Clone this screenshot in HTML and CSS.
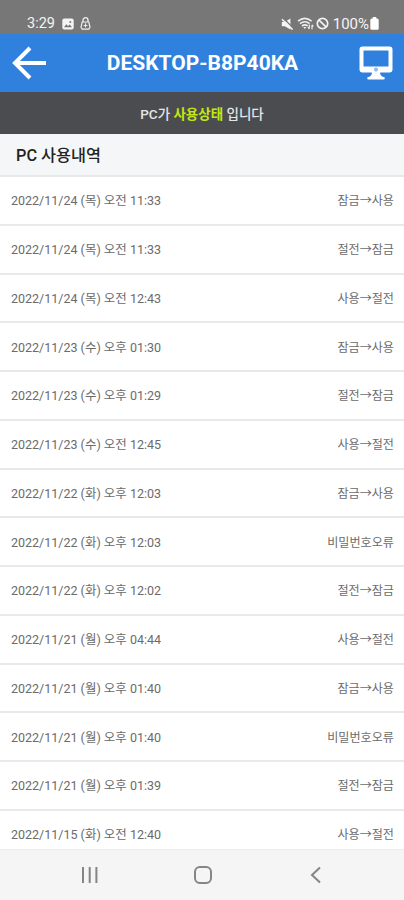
FILE: index.html
```
<!DOCTYPE html>
<html lang="ko">
<head>
<meta charset="utf-8">
<meta name="viewport" content="width=device-width, initial-scale=1">
<title>PC 사용내역</title>
<link rel="stylesheet" href="styles.css">
</head>
<body>
<div class="phone">
  <div class="status">
    <span class="clock">3:29</span>
    <svg class="st-image" width="12" height="12" viewBox="0 0 12 12"><rect x=".3" y=".5" width="11.4" height="11" rx="2" fill="#f4f4f4"/><path d="M2 9.3 4.3 6.3 6 8 7.8 6.5 10 9.3Z" fill="#777"/><circle cx="8.3" cy="3.9" r="1" fill="#777"/></svg>
    <svg class="st-lock" width="11" height="13" viewBox="0 0 11 13" fill="none" stroke="#eee"><path d="M3 5V3.2a2.5 2.5 0 0 1 5 0V5" stroke-width="1.3"/><path d="M2.2 5h6.6l1.2 5.2-1.2 2H2.2L1 10.2Z" stroke-width="1.2"/><path d="M5.5 6.3v4M3.6 8.6h3.8" stroke-width="1"/></svg>
    <span class="spacer"></span>
    <svg class="st-mute" width="13" height="12" viewBox="0 0 13 12"><path d="M.8 4h3L9.400.5v11L3.800 8.300h-3Z" fill="#f4f4f4"/><path d="m2.600.6 10 10" stroke="#777" stroke-width="1.400"/><path d="m1 1.200 10.600 10.300" stroke="#f4f4f4" stroke-width="1.600"/></svg>
    <svg class="st-wifi" width="17" height="13" viewBox="0 0 17 13" fill="none" stroke="#eee" stroke-width="1.600"><path d="M1 4.200q6.800-5.500 13.600 0M3 6.700q4.800-3.800 9.600 0M5 9q2.800-2.200 5.600 0"/><path d="m6.200 10 1.600 2 1.600-2Z" fill="#eee" stroke="none"/><path d="M12.300 7.500v4.200m-1.300-1.300 1.300 1.500M15 12.200V8m1.300 1.300L15 7.800" stroke-width="1.200"/></svg>
    <svg class="st-block" width="13" height="13" viewBox="0 0 13 13" fill="none" stroke="#f2f2f2" stroke-width="1.700"><circle cx="6.500" cy="6.500" r="5.200"/><path d="m2.800 2.800 7.400 7.400"/></svg>
    <span class="percent">100%</span>
    <svg class="st-battery" width="9" height="13" viewBox="0 0 9 13" fill="#fff"><rect x="2.700" width="3.600" height="3" rx=".6"/><rect x=".3" y="1.400" width="8.400" height="11.400" rx="1.600"/></svg>
  </div>
  <header class="header">
    <svg class="back" width="34" height="34" viewBox="0 0 34 34" fill="none" stroke="#fff" stroke-width="4"><path d="M18 2 3 17l15 15M3.500 17H34"/></svg>
    <h1 class="title">DESKTOP-B8P40KA</h1>
    <svg class="monitor" width="34" height="34" viewBox="0 0 34 34"><path fill="#fff" fill-rule="evenodd" d="M3.500.5h27a3 3 0 0 1 3 3v20a3 3 0 0 1-3 3H21q.3 3.600 3.500 4.500a1.200 1.200 0 0 1 0 2.500h-15a1.200 1.200 0 0 1 0-2.500q3.200-.9 3.500-4.500H3.500a3 3 0 0 1-3-3v-20a3 3 0 0 1 3-3ZM4.500 4.500v16h25v-16Z"/><circle cx="17" cy="23.500" r="1.600" fill="#a5c8ef" stroke="#5b98df" stroke-width=".7"/></svg>
  </header>
  <div class="notice"><span class="notice-text">PC가 <b>사용상태</b> 입니다</span></div>
  <h2 class="section">PC 사용내역</h2>
  <ul class="log">
    <li><span class="date">2022/11/24 (목) 오전 11:33</span><span class="event">잠금→사용</span></li>
    <li><span class="date">2022/11/24 (목) 오전 11:33</span><span class="event">절전→잠금</span></li>
    <li><span class="date">2022/11/24 (목) 오전 12:43</span><span class="event">사용→절전</span></li>
    <li><span class="date">2022/11/23 (수) 오후 01:30</span><span class="event">잠금→사용</span></li>
    <li><span class="date">2022/11/23 (수) 오후 01:29</span><span class="event">절전→잠금</span></li>
    <li><span class="date">2022/11/23 (수) 오전 12:45</span><span class="event">사용→절전</span></li>
    <li><span class="date">2022/11/22 (화) 오후 12:03</span><span class="event">잠금→사용</span></li>
    <li><span class="date">2022/11/22 (화) 오후 12:03</span><span class="event">비밀번호오류</span></li>
    <li><span class="date">2022/11/22 (화) 오후 12:02</span><span class="event">절전→잠금</span></li>
    <li><span class="date">2022/11/21 (월) 오후 04:44</span><span class="event">사용→절전</span></li>
    <li><span class="date">2022/11/21 (월) 오후 01:40</span><span class="event">잠금→사용</span></li>
    <li><span class="date">2022/11/21 (월) 오후 01:40</span><span class="event">비밀번호오류</span></li>
    <li><span class="date">2022/11/21 (월) 오후 01:39</span><span class="event">절전→잠금</span></li>
    <li><span class="date">2022/11/15 (화) 오전 12:40</span><span class="event">사용→절전</span></li>
  </ul>
  <nav class="nav">
    <svg width="18" height="18" viewBox="0 0 18 18" stroke="#858585" stroke-width="2"><path d="M2 1v16M8.700 1v16M15.400 1v16"/></svg>
    <svg width="20" height="18" viewBox="0 0 20 18" fill="none" stroke="#858585" stroke-width="2"><rect x="2" y="1" width="16" height="16" rx="4.800"/></svg>
    <svg width="18" height="18" viewBox="0 0 18 18" fill="none" stroke="#858585" stroke-width="2"><path d="M13 1.500 5 9l8 7.500"/></svg>
  </nav>
</div>
</body>
</html>
```
FILE: styles.css
```
* { box-sizing: border-box; margin: 0; padding: 0; }

body {
  width: 404px;
  height: 900px;
  overflow: hidden;
  font-family: Roboto, "Noto Sans CJK KR", sans-serif;
}

svg { display: block; flex: none; }

.phone {
  display: flex;
  flex-direction: column;
  width: 404px;
  height: 900px;
  background: #fff;
}

.status {
  display: flex;
  align-items: center;
  flex: none;
  height: 34px;
  padding: 13px 25px 0 27px;
  background: #777;
  color: #f4f4f4;
  font-size: 14.5px;
  line-height: 20px;
}

.spacer { flex: 1; }
.clock { width: 35px; }
.st-lock { margin-left: 6px; }
.st-wifi { margin-left: 3px; }
.st-block { margin-left: 2px; }
.percent { margin-left: 4px; font-size: 15px; }
.st-battery { margin-left: 1px; }

.header {
  display: flex;
  align-items: center;
  justify-content: space-between;
  flex: none;
  height: 58px;
  padding: 0 11px 0 12px;
  background: #3080de;
}

.title {
  color: #fff;
  font-size: 21px;
  line-height: 24px;
  font-weight: 700;
}

.notice {
  display: flex;
  align-items: center;
  justify-content: center;
  flex: none;
  height: 42px;
  padding-top: 1px;
  background: #4b4c50;
  color: #e6e6e6;
  font-size: 13.5px;
  font-weight: 500;
  line-height: 20px;
  white-space: nowrap;
}

.notice b { color: #c4e713; }

.section {
  flex: none;
  height: 43px;
  padding-left: 16px;
  border-bottom: 2px solid #e8e8ea;
  background: #f5f6f8;
  color: #222;
  font-size: 16.3px;
  font-weight: 500;
  line-height: 44px;
}

.log {
  flex: 1;
  min-height: 0;
  overflow: hidden;
  list-style: none;
}

.log li {
  display: flex;
  align-items: center;
  justify-content: space-between;
  height: 48.75px;
  padding: 2px 10px 0 11px;
  border-bottom: 2px solid #e9e9eb;
  color: #6b6b6b;
  font-size: 12.5px;
  line-height: 20px;
  white-space: nowrap;
}

.event { font-size: 12.1px; }

.nav {
  display: flex;
  align-items: center;
  justify-content: space-between;
  flex: none;
  height: 51px;
  padding: 0 79px 0 81px;
  border-top: 1px solid #ededed;
  background: #f5f5f5;
}
```
